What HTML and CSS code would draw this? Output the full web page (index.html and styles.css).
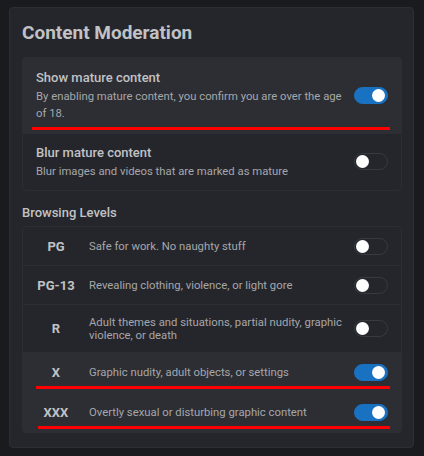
FILE: index.html
```html
<!DOCTYPE html>
<html lang="en">
<head>
  <meta charset="UTF-8">
  <title>Content Moderation</title>
  <link rel="stylesheet" href="styles.css">
</head>
<body>
  <div class="card">
    <h2 class="title">Content Moderation</h2>

    <div class="group">
      <div class="row active marked">
        <div class="text">
          <div class="label">Show mature content</div>
          <div class="desc">By enabling mature content, you confirm you are over the age of 18.</div>
        </div>
        <span class="switch on"></span>
      </div>
      <div class="row">
        <div class="text">
          <div class="label">Blur mature content</div>
          <div class="desc">Blur images and videos that are marked as mature</div>
        </div>
        <span class="switch"></span>
      </div>
    </div>

    <h3 class="subtitle">Browsing Levels</h3>

    <div class="group levels">
      <div class="level">
        <div class="code">PG</div>
        <div class="info">Safe for work. No naughty stuff</div>
        <span class="switch"></span>
      </div>
      <div class="level">
        <div class="code">PG-13</div>
        <div class="info">Revealing clothing, violence, or light gore</div>
        <span class="switch"></span>
      </div>
      <div class="level tall">
        <div class="code">R</div>
        <div class="info">Adult themes and situations, partial nudity, graphic violence, or death</div>
        <span class="switch"></span>
      </div>
      <div class="level active marked">
        <div class="code">X</div>
        <div class="info">Graphic nudity, adult objects, or settings</div>
        <span class="switch on"></span>
      </div>
      <div class="level active marked last">
        <div class="code">XXX</div>
        <div class="info">Overtly sexual or disturbing graphic content</div>
        <span class="switch on"></span>
      </div>
    </div>
  </div>
</body>
</html>
```

FILE: styles.css
```css
body {
  margin: 0;
  padding: 7px 10px 10px 9px;
  background-color: #1a1b1e;
  font-family: Roboto, "Noto Sans", sans-serif;
  color: #c1c2c5;
}

.card {
  background-color: #25262b;
  border: 1px solid #2c2e33;
  border-radius: 4px;
  padding: 13px 11px 14px 12px;
}

.title {
  margin: 0 0 12px;
  font-size: 19px;
  font-weight: 700;
  line-height: 24px;
}

.group {
  border: 1px solid #2c2e33;
  border-radius: 4px;
}

.row {
  position: relative;
  display: flex;
  align-items: center;
  gap: 10px;
  padding: 9px 13px 10px;
  border-top: 1px solid #2c2e33;
}

.row:first-child {
  border-top: none;
  padding: 10px 13px 11px;
}

.active {
  background-color: #2c2e33;
}

.text {
  flex: 1;
}

.label {
  font-size: 13px;
  font-weight: 500;
  line-height: 20px;
}

.desc {
  font-size: 11.3px;
  line-height: 17px;
  color: #a6a7ab;
}

.switch {
  position: relative;
  flex: none;
  width: 32px;
  height: 15px;
  border: 1px solid #373a40;
  border-radius: 9px;
  background-color: #25262b;
}

.switch::after {
  content: "";
  position: absolute;
  top: 1px;
  left: 1px;
  width: 13px;
  height: 13px;
  border-radius: 50%;
  background-color: #fff;
}

.switch.on {
  background-color: #1971c2;
  border-color: #1971c2;
}

.switch.on::after {
  left: auto;
  right: 2px;
}

.marked::before {
  content: "";
  position: absolute;
  left: 9px;
  right: 11px;
  bottom: 3px;
  height: 3px;
  background-color: #f00;
}

.subtitle {
  margin: 12px 0 4px;
  font-size: 13px;
  font-weight: 500;
  line-height: 19px;
}

.level {
  position: relative;
  display: flex;
  align-items: center;
  height: 38px;
  padding: 0 13px 0 0;
  border-top: 1px solid #2c2e33;
}

.level:first-child {
  border-top: none;
}

.level.tall {
  height: 47px;
}

.level.active {
  height: 39px;
}

.level.marked::before {
  left: 13px;
}

.level.last.marked::before {
  left: 15px;
}

.code {
  flex: none;
  width: 66px;
  text-align: center;
  font-size: 13px;
  font-weight: 700;
}

.info {
  flex: 1;
  padding-right: 8px;
  font-size: 11.3px;
  line-height: 13px;
  color: #a6a7ab;
}
```
